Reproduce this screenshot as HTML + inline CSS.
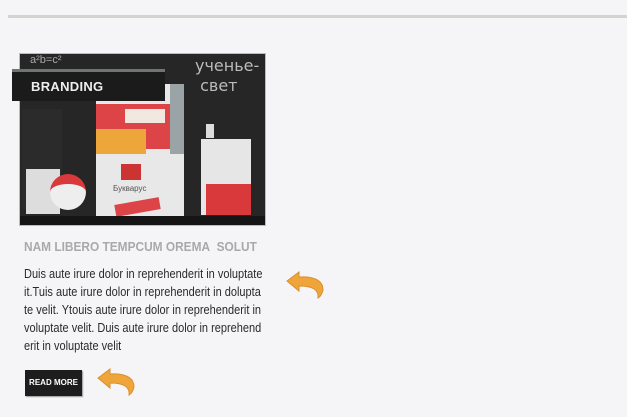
<!DOCTYPE html>
<html><head><meta charset="utf-8"><style>
*{margin:0;padding:0;box-sizing:border-box}
body{width:627px;height:417px;background:#f5f5f7;position:relative;overflow:hidden;font-family:"Liberation Sans",Arial,sans-serif}
.line{position:absolute;left:8px;top:15px;width:619px;height:3px;background:#d5d2cf}
.img{position:absolute;left:19px;top:53px;width:247px;height:173px;background:#262626;border:1px solid #bbb;overflow:hidden}
.b{position:absolute}
.lab{position:absolute;left:12px;top:69px;width:153px;height:32px;background:#1b1b1b;border-top:3px solid #6d7472;color:#eee;font-weight:bold;font-size:13px;line-height:29px;padding-left:19px;letter-spacing:.3px}
h3{position:absolute;left:24px;top:240px;font-size:12.5px;color:#a9a9a9;font-weight:bold;white-space:nowrap;transform:scaleX(.95);transform-origin:left}
p{position:absolute;left:24px;top:265px;font-size:12.5px;line-height:18px;color:#2a2a2a;white-space:nowrap;transform:scaleX(.88);transform-origin:left}
.btn{position:absolute;left:25px;top:370px;width:57px;height:26px;background:#1d1d1d;color:#fff;font-size:8px;font-weight:bold;line-height:26px;text-align:center;box-shadow:1px 1px 1px #999}
svg.ar{position:absolute}
</style></head><body>
<div class="line"></div>
<div class="img">
 <div class="b" style="left:175px;top:0;width:72px;height:60px;color:#bbb;font-size:16px;font-family:'DejaVu Sans',sans-serif;line-height:20px;padding-top:2px">ученье-<br>&nbsp;свет</div>
 <div class="b" style="left:10px;top:0;color:#aaa;font-size:11px">a²b=c²</div>
 <div class="b" style="left:2px;top:55px;width:40px;height:100px;background:#2b2b2b"></div>
 <div class="b" style="left:76px;top:30px;width:88px;height:135px;background:#e8e8e8"></div>
 <div class="b" style="left:76px;top:50px;width:88px;height:45px;background:#dc4447"></div>
 <div class="b" style="left:76px;top:75px;width:50px;height:25px;background:#eca63a"></div>
 <div class="b" style="left:105px;top:55px;width:40px;height:14px;background:#f1e8e0"></div>
 <div class="b" style="left:150px;top:30px;width:14px;height:70px;background:#9aa3a6"></div>
 <div class="b" style="left:101px;top:110px;width:20px;height:16px;background:#c33"></div>
 <div class="b" style="left:93px;top:130px;font-size:8px;color:#555">Букварус</div>
 <div class="b" style="left:181px;top:85px;width:50px;height:76px;background:#e6e6e6"></div>
 <div class="b" style="left:186px;top:130px;width:45px;height:31px;background:#d9393b"></div>
 <div class="b" style="left:186px;top:70px;width:8px;height:14px;background:#ddd"></div>
 <div class="b" style="left:6px;top:115px;width:34px;height:45px;background:#ddd"></div>
 <div class="b" style="left:30px;top:120px;width:36px;height:36px;border-radius:50%;background:#eee;border-top:10px solid #d9393b"></div>
 <div class="b" style="left:95px;top:147px;width:45px;height:12px;background:#dc4447;transform:rotate(-10deg)"></div>
 <div class="b" style="left:0;top:162px;width:247px;height:11px;background:#151515"></div>
</div>
<div class="lab">BRANDING</div>
<h3>NAM LIBERO TEMPCUM OREMA&nbsp; SOLUT</h3>
<p>Duis aute irure dolor in reprehenderit in voluptate<br>it.Tuis aute irure dolor in reprehenderit in dolupta<br>te velit. Ytouis aute irure dolor in reprehenderit in<br>voluptate velit. Duis aute irure dolor in reprehend<br>erit in voluptate velit</p>
<div class="btn">READ MORE</div>
<svg class="ar" style="left:285px;top:270px" width="42" height="30" viewBox="0 0 42 30"><path d="M2 11 L14 2 L14 7 C28 6 38 10 38 20 C37 24 35 27 33 28 C34 20 28 16 14 16 L14 21 Z" fill="#f0a53a" stroke="#d89030" stroke-width="1"/></svg>
<svg class="ar" style="left:96px;top:367px" width="42" height="30" viewBox="0 0 42 30"><path d="M2 11 L14 2 L14 7 C28 6 38 10 38 20 C37 24 35 27 33 28 C34 20 28 16 14 16 L14 21 Z" fill="#f0a53a" stroke="#d89030" stroke-width="1"/></svg>
</body></html>
